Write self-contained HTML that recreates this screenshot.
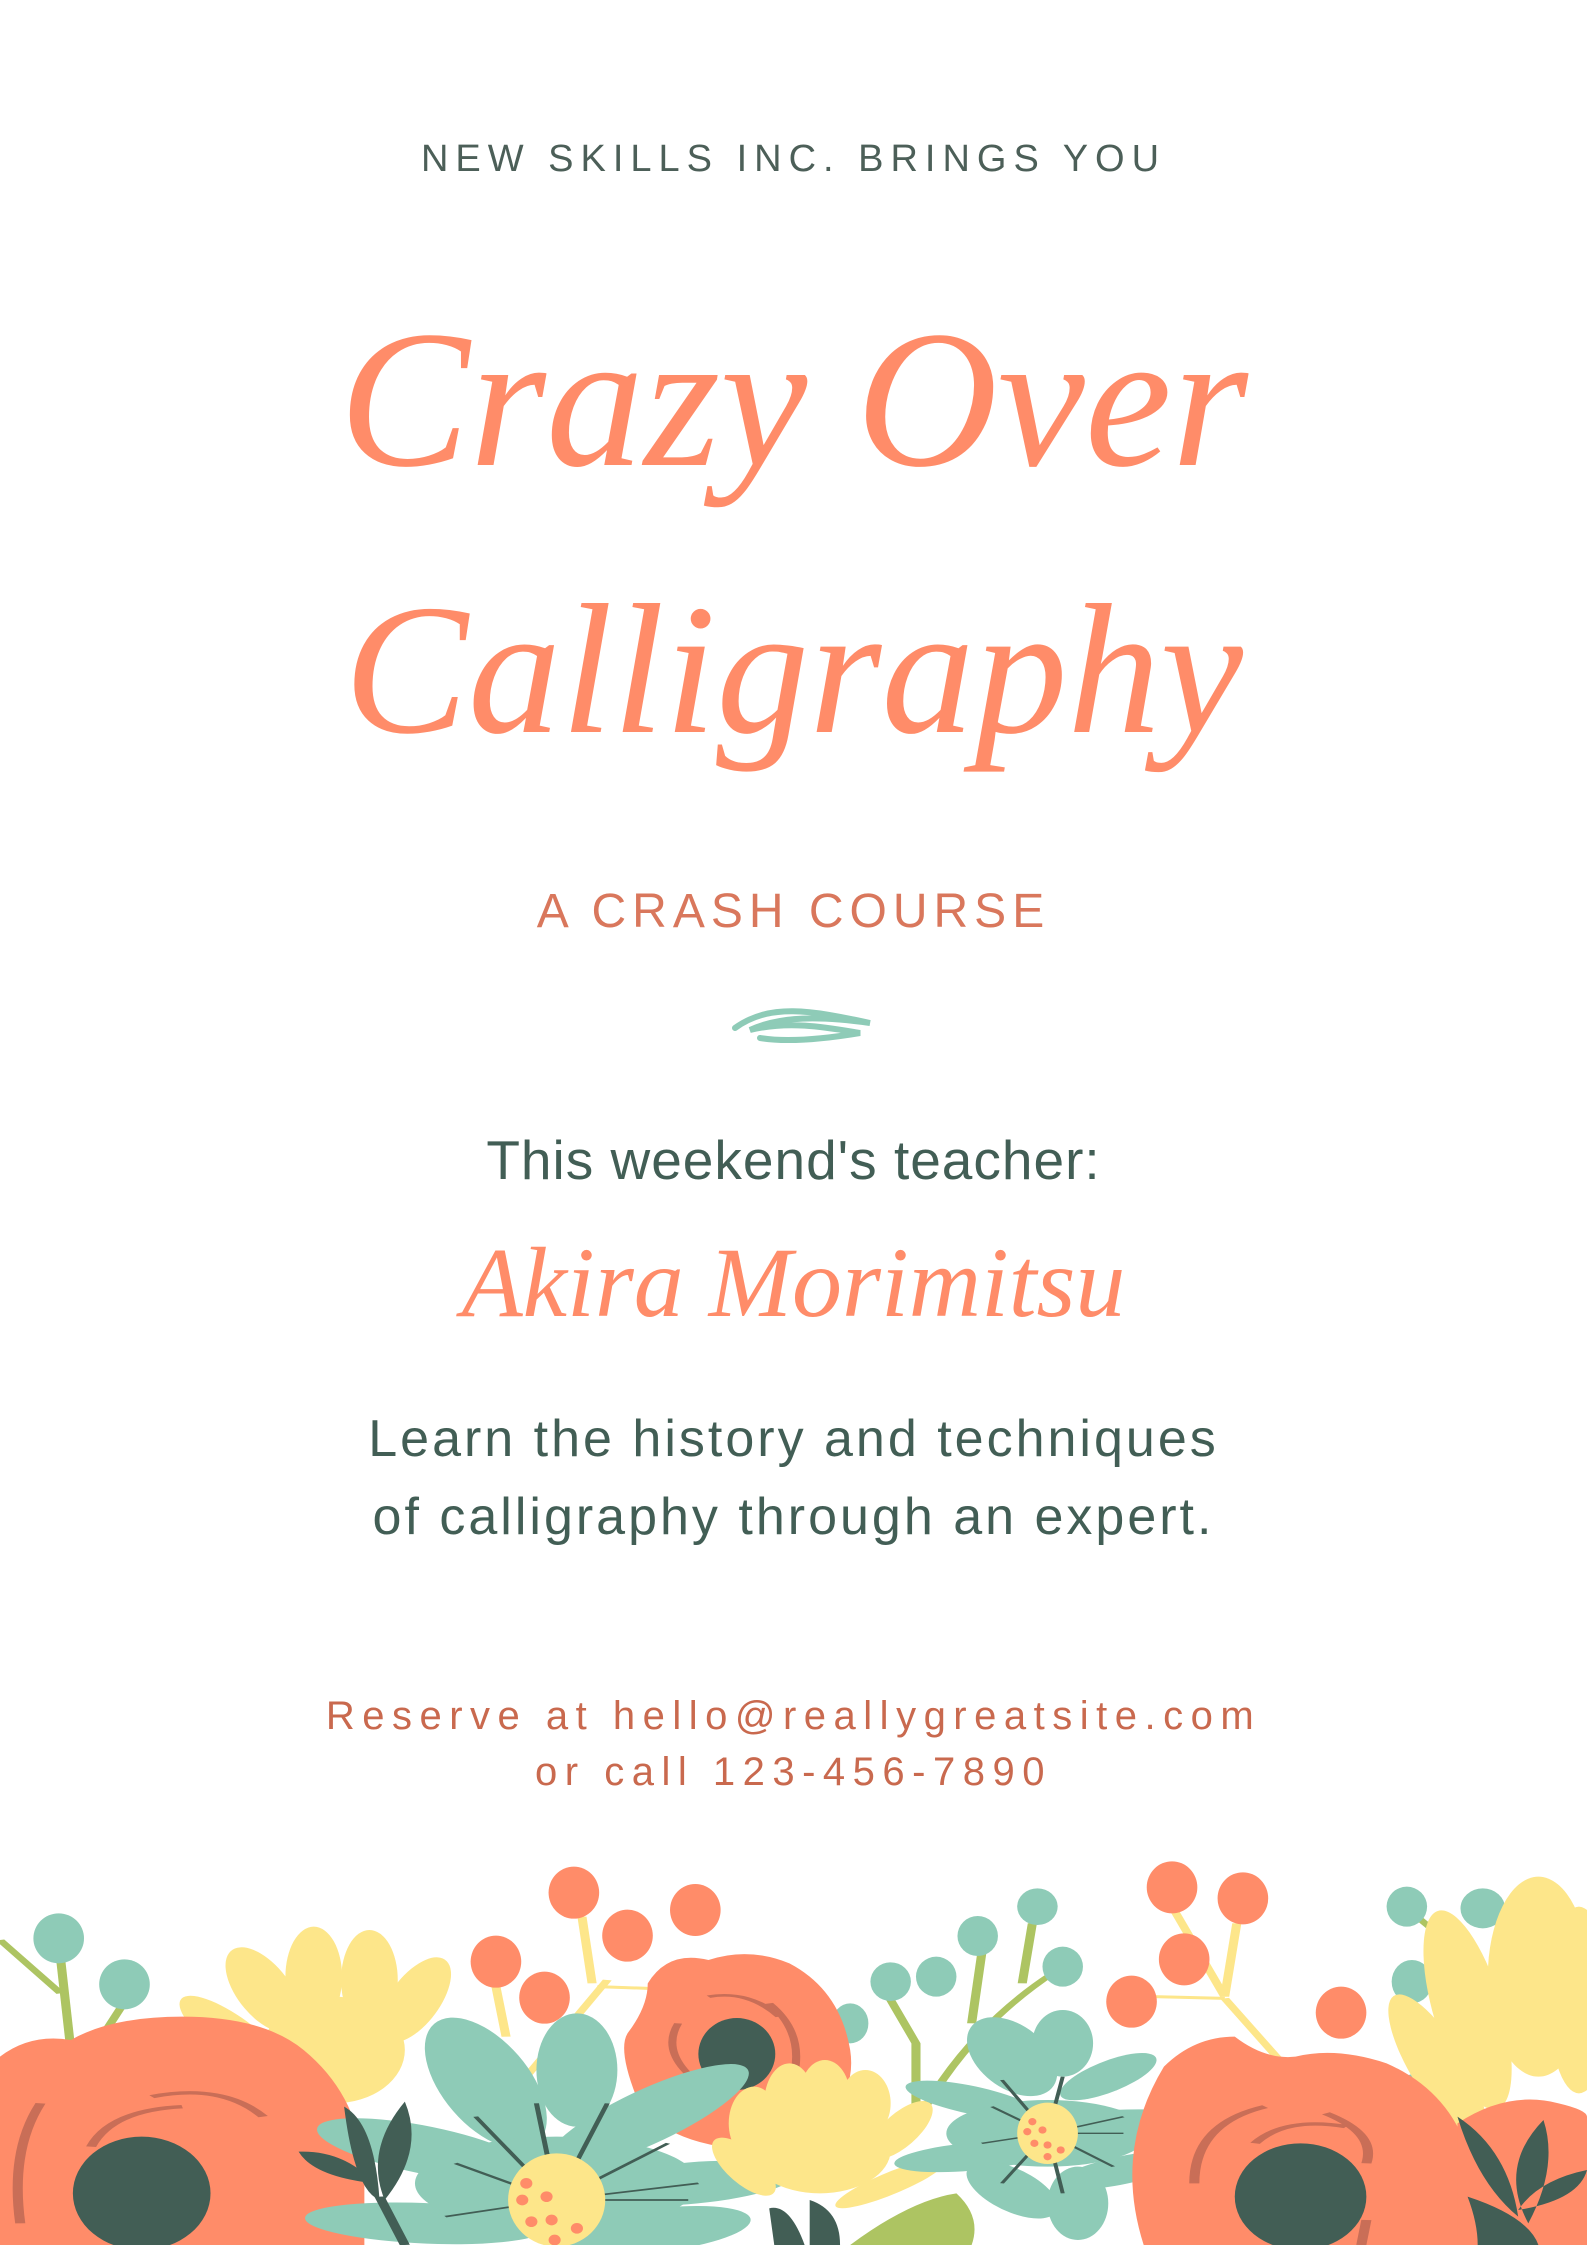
<!DOCTYPE html>
<html><head><meta charset="utf-8"><style>
html,body{margin:0;padding:0;background:#fff}
body{width:1587px;height:2245px;position:relative;overflow:hidden;font-family:"Liberation Sans",sans-serif}
.t{position:absolute;left:0;width:1587px;text-align:center;white-space:nowrap}
</style></head><body>
<div class="t" style="top:138px;font-size:38px;letter-spacing:7px;color:#4c5f58;font-weight:300">NEW SKILLS INC. BRINGS YOU</div>
<div class="t" style="top:270px;font-family:'Liberation Serif',serif;font-style:italic;font-size:196px;color:#FF8C69;line-height:260px">Crazy Over</div>
<div class="t" style="top:540px;font-family:'Liberation Serif',serif;font-style:italic;font-size:186px;color:#FF8C69;line-height:260px">Calligraphy</div>
<div class="t" style="top:884px;font-size:48px;letter-spacing:6px;color:#D9775C">A CRASH COURSE</div>
<svg style="position:absolute;left:730px;top:998px" width="145" height="50" viewBox="0 0 145 50"><path d="M5 30 C40 5 80 12 140 25 C90 18 50 18 20 32 C60 22 100 30 130 35 C100 40 60 45 30 40" fill="none" stroke="#8ECBB7" stroke-width="6" stroke-linecap="round"/></svg>
<div class="t" style="top:1128px;font-size:55px;letter-spacing:1px;color:#425E55">This weekend's teacher:</div>
<div class="t" style="top:1225px;font-family:'Liberation Serif',serif;font-style:italic;font-size:100px;color:#FF8C69">Akira Morimitsu</div>
<div class="t" style="top:1400px;font-size:52px;letter-spacing:3px;color:#425E55;line-height:78px">Learn the history and techniques<br>of calligraphy through an expert.</div>
<div class="t" style="top:1688px;font-size:40px;letter-spacing:7.5px;color:#C9694E;line-height:56px">Reserve at hello@reallygreatsite.com<br>or call 123-456-7890</div>
<svg style="position:absolute;left:0;top:1850px" width="1587" height="395" viewBox="0 0 1568 1185" preserveAspectRatio="none">
<g stroke="#ADC462" stroke-width="9" fill="none">
<path d="M0 270 L60 430"/><path d="M60 330 L70 600"/><path d="M120 470 L88 620"/>
<path d="M970 310 L960 520"/><path d="M1020 220 L1010 400"/><path d="M1040 370 Q950 550 900 850"/><path d="M880 450 L905 580 L905 780"/><path d="M1400 200 L1440 300"/>
</g>
<g stroke="#FDE68A" stroke-width="9" fill="none">
<path d="M575 200 L585 400"/><path d="M600 390 L520 680"/><path d="M1160 180 L1210 440"/><path d="M1222 220 L1210 440"/><path d="M1140 440 L1210 445"/><path d="M1210 445 L1270 650"/><path d="M590 410 L640 415"/><path d="M490 410 L500 560"/>
</g>
<g fill="#8ECBB7">
<ellipse cx="58" cy="265" rx="25" ry="75"/><ellipse cx="123" cy="403" rx="25" ry="75"/>
<ellipse cx="880" cy="395" rx="20" ry="58"/><ellipse cx="925" cy="380" rx="20" ry="60"/><ellipse cx="966" cy="258" rx="20" ry="60"/><ellipse cx="1050" cy="350" rx="20" ry="60"/><ellipse cx="1025" cy="170" rx="20" ry="55"/><ellipse cx="840" cy="520" rx="18" ry="60"/><ellipse cx="1395" cy="395" rx="20" ry="65"/><ellipse cx="1465" cy="175" rx="22" ry="60"/><ellipse cx="1390" cy="170" rx="20" ry="60"/><ellipse cx="1415" cy="580" rx="20" ry="60"/><ellipse cx="1400" cy="730" rx="20" ry="60"/><ellipse cx="1425" cy="900" rx="20" ry="65"/>
</g>
<g fill="#FF8C69">
<ellipse cx="567" cy="128" rx="25" ry="78"/><ellipse cx="687" cy="180" rx="25" ry="78"/><ellipse cx="620" cy="257" rx="25" ry="78"/><ellipse cx="490" cy="335" rx="25" ry="78"/><ellipse cx="538" cy="443" rx="25" ry="78"/><ellipse cx="1158" cy="112" rx="25" ry="78"/><ellipse cx="1228" cy="145" rx="25" ry="78"/><ellipse cx="1170" cy="328" rx="25" ry="78"/><ellipse cx="1118" cy="455" rx="25" ry="78"/><ellipse cx="1325" cy="488" rx="25" ry="78"/>
</g>
<g fill="#FDE68A">
<ellipse cx="260" cy="420" rx="30" ry="130" transform="rotate(-10 260 420)"/><ellipse cx="310" cy="380" rx="28" ry="150"/><ellipse cx="365" cy="390" rx="28" ry="150"/><ellipse cx="410" cy="450" rx="28" ry="130" transform="rotate(10 410 450)"/><ellipse cx="230" cy="560" rx="30" ry="130" transform="rotate(-20 230 560)"/><ellipse cx="240" cy="700" rx="28" ry="110" transform="rotate(-45 240 700)"/><ellipse cx="330" cy="600" rx="70" ry="160"/>
</g>
<path d="M0 620 Q30 550 70 570 Q110 500 180 500 Q260 500 300 600 Q360 750 360 1000 L360 1185 L0 1185 Z" fill="#FF8C69"/>
<path d="M150 740 Q220 700 260 800 M40 760 Q10 900 20 1120 M90 890 Q110 780 180 770" stroke="#C96E57" stroke-width="10" fill="none"/>
<ellipse cx="140" cy="1030" rx="68" ry="170" fill="#425E55"/>
<path d="M640 400 Q660 300 700 330 Q740 290 780 340 Q830 420 840 600 Q850 800 760 900 Q660 900 630 750 Q610 600 620 550 Q640 470 640 400 Z" fill="#FF8C69"/>
<path d="M700 440 Q740 420 770 500 M670 520 Q650 620 700 720 M760 460 Q800 560 780 720" stroke="#C96E57" stroke-width="8" fill="none"/>
<ellipse cx="728" cy="612" rx="38" ry="108" fill="#425E55"/>
<g fill="#8ECBB7">
<ellipse cx="480" cy="700" rx="50" ry="200" transform="rotate(-10 480 700)"/><ellipse cx="570" cy="660" rx="40" ry="170"/><ellipse cx="640" cy="800" rx="50" ry="180" transform="rotate(30 640 800)"/><ellipse cx="680" cy="1000" rx="60" ry="110" transform="rotate(70 680 1000)"/><ellipse cx="420" cy="900" rx="60" ry="130" transform="rotate(-50 420 900)"/><ellipse cx="420" cy="1120" rx="60" ry="120" transform="rotate(-80 420 1120)"/><ellipse cx="650" cy="1140" rx="60" ry="100" transform="rotate(60 650 1140)"/><circle cx="550" cy="1000" r="140"/>
</g>
<g stroke="#425E55" stroke-width="5"><path d="M550 1050 L470 800 M550 1050 L530 760 M550 1050 L600 760 M550 1050 L660 880 M550 1050 L680 1050 M550 1050 L440 1100 M550 1050 L450 940 M550 1050 L690 1000"/></g>
<ellipse cx="550" cy="1050" rx="48" ry="140" fill="#FDE68A"/>
<g fill="#FF8C69"><ellipse cx="520" cy="1000" rx="6" ry="16"/><ellipse cx="540" cy="1040" rx="6" ry="16"/><ellipse cx="516" cy="1050" rx="6" ry="16"/><ellipse cx="545" cy="1110" rx="6" ry="16"/><ellipse cx="525" cy="1115" rx="6" ry="16"/><ellipse cx="570" cy="1135" rx="6" ry="16"/><ellipse cx="548" cy="1170" rx="6" ry="16"/></g>
<path d="M340 770 Q370 820 375 1050 Q350 1020 340 770 Z M400 755 Q420 900 380 1050 Q360 900 400 755 Z M295 905 Q340 900 370 1000 Q310 980 295 905 Z" fill="#425E55"/>
<path d="M375 1040 L400 1185" stroke="#425E55" stroke-width="10"/>
<g fill="#FDE68A">
<ellipse cx="745" cy="820" rx="25" ry="110"/><ellipse cx="780" cy="760" rx="25" ry="120"/><ellipse cx="815" cy="740" rx="25" ry="110"/><ellipse cx="855" cy="760" rx="25" ry="100"/><ellipse cx="890" cy="840" rx="22" ry="90" transform="rotate(15 890 840)"/><ellipse cx="735" cy="950" rx="22" ry="90" transform="rotate(-15 735 950)"/><ellipse cx="880" cy="1000" rx="22" ry="90" transform="rotate(35 880 1000)"/><ellipse cx="810" cy="900" rx="70" ry="130"/>
</g>
<path d="M760 1075 Q780 1060 795 1185 L765 1185 Z M800 1050 Q830 1080 830 1185 L800 1185 Z" fill="#425E55"/>
<path d="M840 1185 Q900 1050 945 1030 Q970 1100 960 1185 Z" fill="#ADC462"/>
<g fill="#8ECBB7">
<ellipse cx="1000" cy="620" rx="40" ry="120" transform="rotate(-10 1000 620)"/><ellipse cx="1050" cy="580" rx="30" ry="100"/><ellipse cx="1095" cy="680" rx="30" ry="80" transform="rotate(30 1095 680)"/><ellipse cx="1105" cy="820" rx="40" ry="80" transform="rotate(80 1105 820)"/><ellipse cx="960" cy="750" rx="35" ry="80" transform="rotate(-50 960 750)"/><ellipse cx="960" cy="920" rx="40" ry="80" transform="rotate(-110 960 920)"/><ellipse cx="1000" cy="1020" rx="35" ry="90" transform="rotate(-20 1000 1020)"/><ellipse cx="1065" cy="1060" rx="30" ry="110"/><ellipse cx="1110" cy="960" rx="35" ry="80" transform="rotate(50 1110 960)"/><circle cx="1035" cy="850" r="100"/>
</g>
<g stroke="#425E55" stroke-width="4"><path d="M1035 850 L990 690 M1035 850 L1050 680 M1035 850 L1110 800 M1035 850 L1110 850 M1035 850 L1100 950 M1035 850 L1050 1030 M1035 850 L990 1000 M1035 850 L970 880 M1035 850 L980 770"/></g>
<ellipse cx="1035" cy="850" rx="30" ry="92" fill="#FDE68A"/>
<g fill="#FF8C69"><ellipse cx="1020" cy="815" rx="4" ry="11"/><ellipse cx="1015" cy="845" rx="4" ry="11"/><ellipse cx="1030" cy="840" rx="4" ry="11"/><ellipse cx="1022" cy="880" rx="4" ry="11"/><ellipse cx="1035" cy="885" rx="4" ry="11"/><ellipse cx="1048" cy="900" rx="4" ry="11"/><ellipse cx="1035" cy="920" rx="4" ry="11"/></g>
<g fill="#FDE68A">
<ellipse cx="1520" cy="380" rx="50" ry="300"/><ellipse cx="1450" cy="480" rx="35" ry="300" transform="rotate(-5 1450 480)"/><ellipse cx="1560" cy="450" rx="30" ry="280"/><ellipse cx="1420" cy="650" rx="30" ry="220" transform="rotate(-10 1420 650)"/>
</g>
<path d="M1130 1185 Q1100 900 1150 650 Q1180 560 1220 560 Q1250 630 1280 620 Q1320 590 1370 640 Q1430 720 1450 900 L1450 1185 Z" fill="#FF8C69"/>
<path d="M1440 820 Q1490 720 1540 760 Q1568 780 1568 800 L1568 1185 L1440 1185 Z" fill="#FF8C69"/>
<path d="M1250 770 Q1180 820 1180 1000 M1310 790 Q1360 850 1350 940 M1240 880 Q1270 800 1330 830 M1350 1110 L1345 1185" stroke="#C96E57" stroke-width="10" fill="none"/>
<ellipse cx="1285" cy="1040" rx="65" ry="160" fill="#425E55"/>
<path d="M1440 800 Q1490 900 1500 1100 Q1460 1000 1440 800 Z M1525 810 Q1540 950 1510 1120 Q1480 950 1525 810 Z M1568 960 Q1520 990 1500 1080 Q1560 1050 1568 960 Z M1450 1040 Q1460 1120 1460 1185 L1520 1185 Q1510 1100 1450 1040 Z" fill="#425E55"/>
</svg>
</body></html>
